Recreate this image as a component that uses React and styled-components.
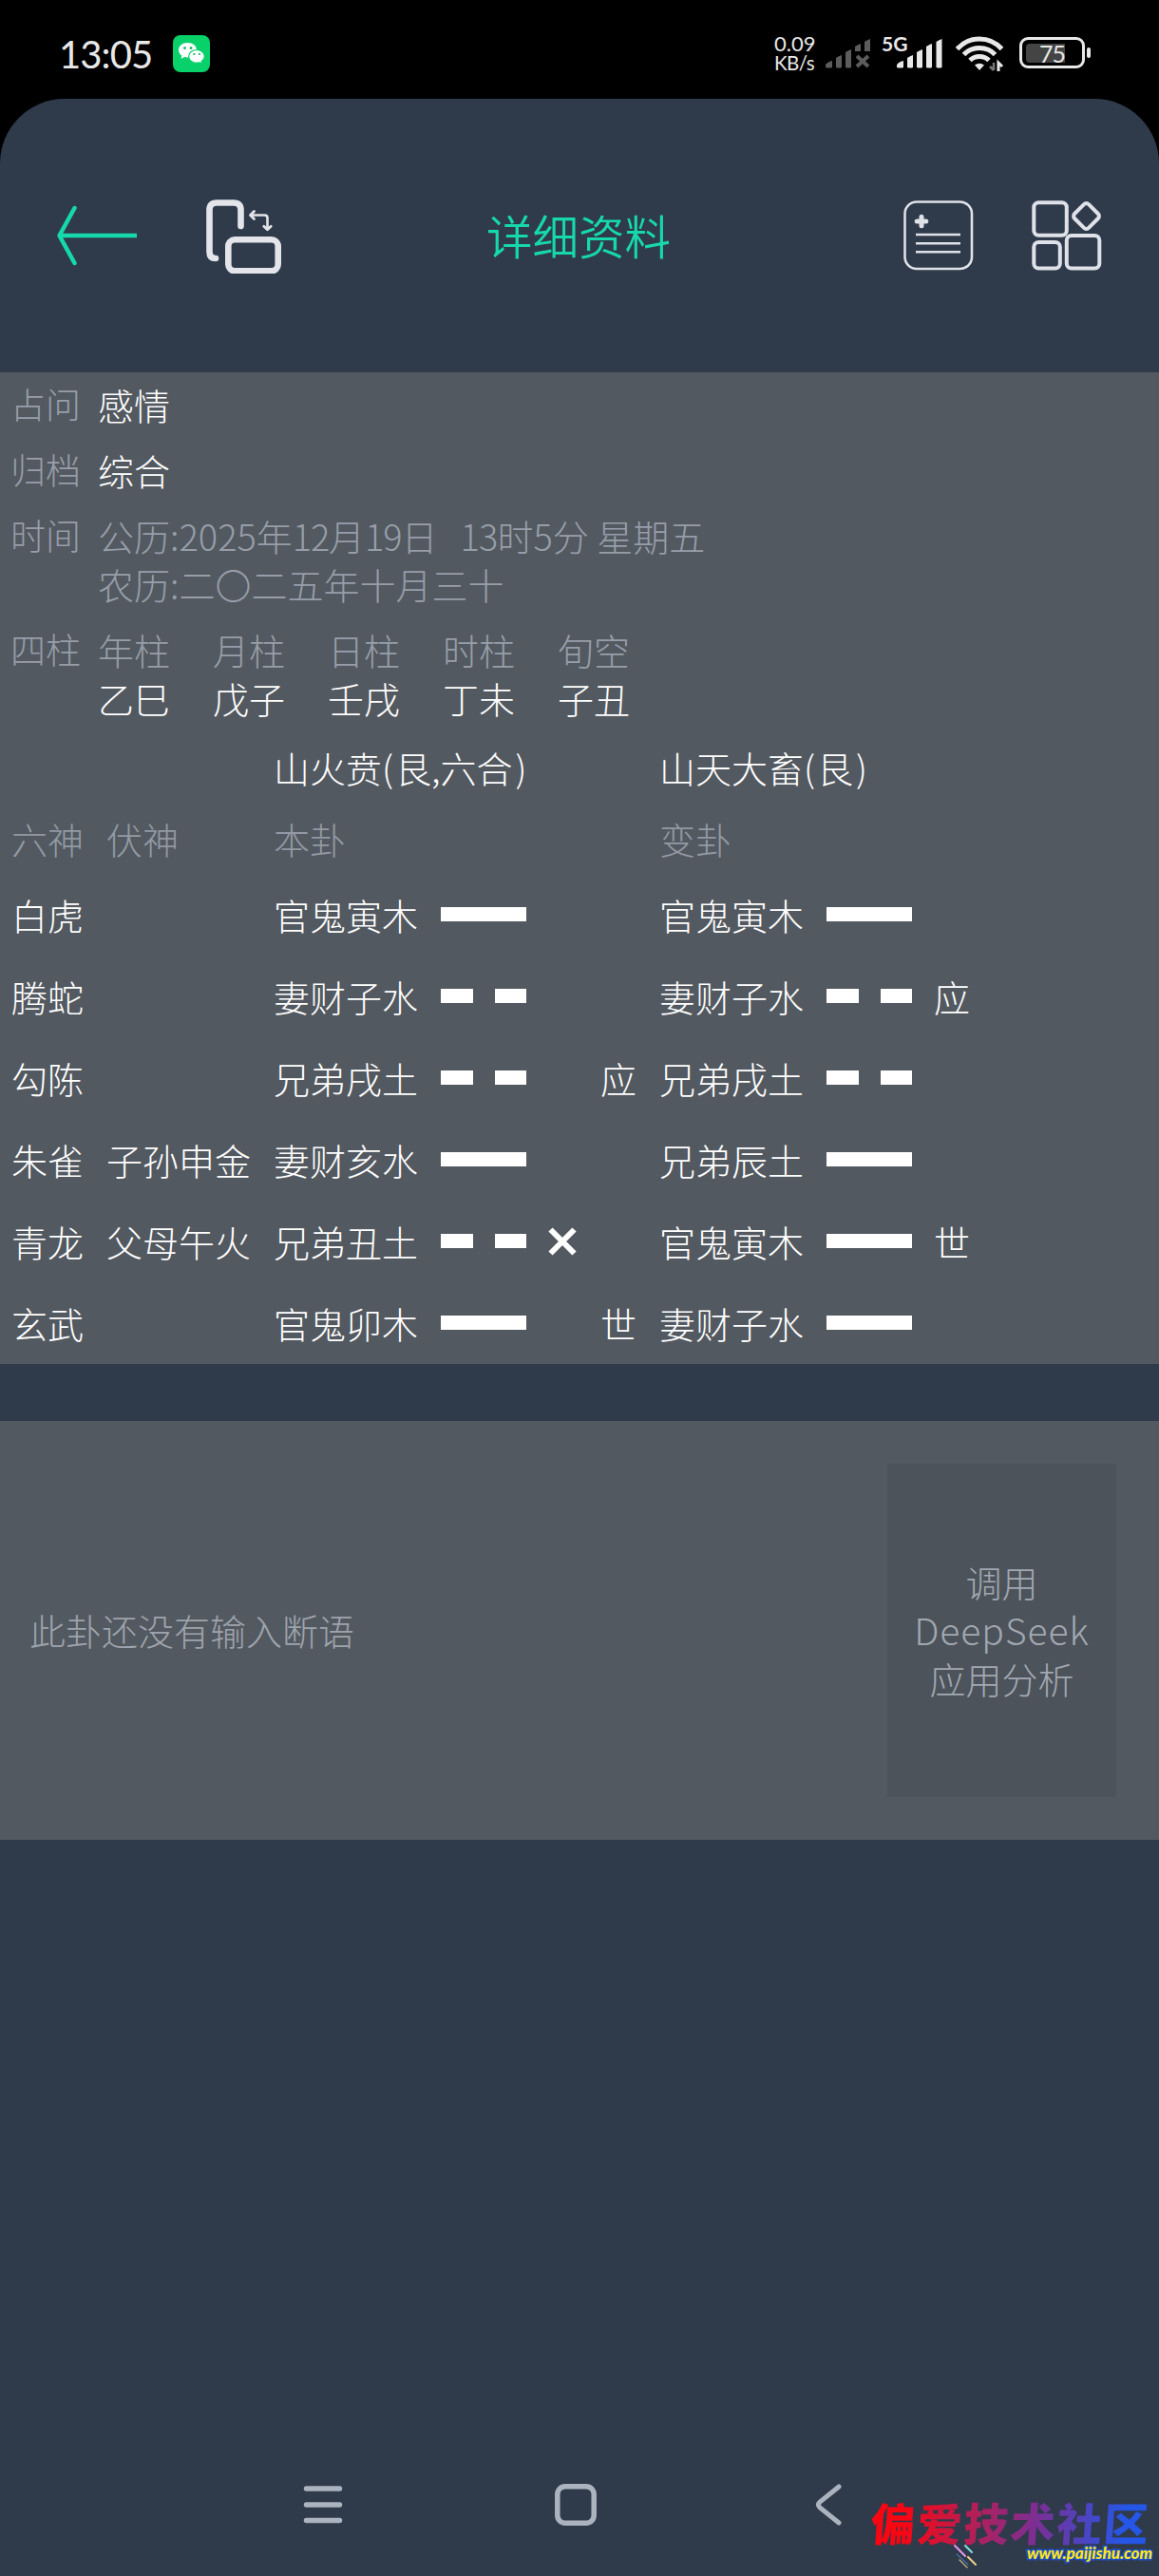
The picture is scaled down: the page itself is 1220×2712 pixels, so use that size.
import React from "react";
import styled, { createGlobalStyle } from "styled-components";

const GlobalStyle = createGlobalStyle`
  html, body { margin: 0; padding: 0; background: #000; }
  * { box-sizing: border-box; }
`;

const Screen = styled.div`
  position: relative;
  width: 1220px;
  height: 2712px;
  display: flex;
  flex-direction: column;
  overflow: hidden;
  background: #000;
  font-family: "Noto Sans CJK SC", "Noto Sans", sans-serif;
  font-weight: 300;
  font-size: 38px;
  line-height: 51px;
  color: #fff;
  white-space: pre;
`;

const StatusBar = styled.div`
  height: 104px;
  flex: none;
  display: flex;
  align-items: flex-start;
  padding: 37px 72px 0 62px;
  color: #e8e8e8;
  svg { display: block; flex: none; }
`;

const Clock = styled.div`
  width: 120px;
  font: 400 40px/40px Lato, sans-serif;
  letter-spacing: -0.9px;
`;

const Spacer = styled.div`
  flex: 1;
`;

const NetSpeed = styled.div`
  width: 54px;
  margin-top: -1px;
  font: 400 21px/20px Lato, sans-serif;
  display: flex;
  flex-direction: column;
`;

const Rate = styled.span`
  font-size: 22px;
  line-height: 20px;
`;

const Unit = styled.span`
  font-size: 20.500px;
  line-height: 20px;
  letter-spacing: -0.5px;
`;

const Network = styled.div`
  width: 78px;
  margin-left: 9px;
  display: flex;
`;

const NetLabel = styled.div`
  width: 16px;
  font: 700 21px/18px Lato, sans-serif;
`;

const Battery = styled.div`
  display: flex;
  align-items: center;
  gap: 2px;
  margin-top: 2px;
`;

const BatteryCase = styled.div`
  width: 69px;
  height: 33px;
  padding: 4px;
  border: 3px solid #e8e8e8;
  border-radius: 9px;
  display: flex;
`;

const BatteryLevel = styled.div`
  width: 41px;
  height: 20px;
  border-radius: 4px 0 0 4px;
  background: #444;
  font: 400 25px/20px Lato, sans-serif;
  letter-spacing: -1px;
  text-align: right;
`;

const BatteryTip = styled.div`
  width: 4px;
  height: 11px;
  border-radius: 2px;
  background: #e8e8e8;
`;

const AppBody = styled.div`
  flex: 1;
  display: flex;
  flex-direction: column;
  background: #2f3a4b;
  border-radius: 68px 68px 0 0;
`;

const Header = styled.header`
  height: 288px;
  flex: none;
  display: grid;
  grid-template-columns: 1fr auto 1fr;
  align-items: center;
  padding: 0 60px 0 58px;
  svg { display: block; }
`;

const HeaderSide = styled.div`
  display: flex;
  align-items: center;
  justify-content: ${(p) => (p.$end ? "flex-end" : "flex-start")};
  gap: ${(p) => p.$gap}px;
`;

const Title = styled.h1`
  margin: 0 0 2px;
  font-size: 48.5px;
  line-height: 60px;
  font-weight: 350;
  color: #16d9ab;
`;

const Panel = styled.section`
  flex: none;
  background: #535960;
`;

const InfoRow = styled.div`
  display: grid;
  grid-template-columns: 92px 1fr;
  padding: 8px 0 10px 11px;
`;

const Label = styled.div`
  font-size: 37px;
  color: #979eaa;
`;

const Value = styled.div`
  color: ${(p) => (p.$muted ? "#979eaa" : "#fff")};
`;

const Digits = styled.span`
  letter-spacing: ${(p) => p.$track}px;
`;

const TimeOfDay = styled.span`
  margin-left: 24px;
`;

const Paren = styled.span`
  padding-right: 2px;
`;

const CloseParen = styled.span`
  padding-left: 3px;
`;

const Pillars = styled.div`
  display: grid;
  grid-template-columns: repeat(5, 121px);
`;

const HexRow = styled.div`
  height: ${(p) => p.$h}px;
  display: grid;
  grid-template-columns: 100px 176px 175px 112px 57px 62px 175px 114px 1fr;
  align-items: center;
  padding-left: 12px;
  color: ${(p) => (p.$muted ? "#9299a4" : "#fff")};
`;

const Cell = styled.div`
  grid-column: ${(p) => p.$col};
  margin-bottom: 2px;
`;

const Yao = styled.div`
  grid-column: ${(p) => p.$col};
  width: 90px;
  height: 15px;
  margin: 0 0 1px 1px;
  display: flex;
  gap: 23px;
`;

const Dash = styled.span`
  flex: 1;
  background: #fff;
`;

const Moving = styled.svg`
  grid-column: 5;
  margin-left: 2px;
`;

const Gap = styled.div`
  height: 60px;
  flex: none;
`;

const NotePanel = styled(Panel)`
  height: 441px;
  display: flex;
  align-items: center;
  justify-content: space-between;
  padding: 0 45px 0 31px;
  color: #9ea4ad;
`;

const NoteText = styled.div`
  margin-bottom: 2px;
`;

const AskButton = styled.button`
  width: 241px;
  height: 351px;
  margin: 0;
  padding: 0 0 2px;
  border: 0;
  background: #4c535b;
  font: inherit;
  color: #a2a8b1;
  text-align: center;
`;

const Brand = styled.div`
  font-size: 39px;
  letter-spacing: 1px;
`;

const NavBar = styled.nav`
  height: 150px;
  flex: none;
  display: flex;
  align-items: center;
  padding-left: 319px;
  svg { display: block; }
  svg + svg { margin-left: 223px; }
  svg:last-child { margin-left: 230px; }
`;

const Watermark = styled.div`
  position: absolute;
  left: 917px;
  top: 2627px;
  width: 300px;
`;

const WatermarkName = styled.div`
  width: 292px;
  font-size: 47px;
  line-height: 56px;
  font-weight: 900;
  letter-spacing: 2px;
  transform: skewX(-4deg);
  color: transparent;
  background: linear-gradient(90deg, #f90613 12%, #b81e52 35%, #7a2f95 60%, #2457e8 92%);
  -webkit-background-clip: text;
  background-clip: text;
`;

const WatermarkUrl = styled.div`
  position: absolute;
  right: 4px;
  top: 50px;
  font: italic 900 17px/22px Lato, sans-serif;
  color: #ffe81a;
  -webkit-text-stroke: 3px #1d50c8;
  paint-order: stroke fill;
`;

const Sparks = styled.svg`
  position: absolute;
  left: 85px;
  top: 50px;
`;

const WeChat = () => (
  <svg width="39" height="39" viewBox="0 0 39 39">
    <rect width="39" height="39" rx="8" fill="#07d168" />
    <path d="M15.5 8C10 8 6 11.400 6 15.700c0 2.400 1.300 4.500 3.400 5.900l-.8 3.200 3.500-1.900c1.100.3 2.200.5 3.400.5 5.500 0 9.500-3.400 9.500-7.700S21 8 15.500 8z" fill="#fff" />
    <path d="M25 15.500c-4.700 0-8.300 3-8.300 6.900s3.600 6.900 8.300 6.900c1.100 0 2.100-.2 3-.5l2.700 1.500-.6-2.700c2-1.200 3.200-3.100 3.200-5.200 0-3.900-3.600-6.900-8.300-6.900z" fill="#fff" stroke="#07d168" strokeWidth="1.200" />
    <g fill="#07b55b">
      <circle cx="12.500" cy="13.600" r="1.400" />
      <circle cx="19" cy="13.600" r="1.400" />
      <circle cx="22.300" cy="20" r="1.100" />
      <circle cx="28" cy="20" r="1.100" />
    </g>
  </svg>
);

const Signal = ({ off }) => (
  <svg width="50" height="38" viewBox="0 0 50 38" fill={off ? "#5c5c5c" : "#e8e8e8"}>
    <path d="M0 34v-2.500q1-3 7-4.500V34q-3.500 1-7 0zM11 34V24q3-2 6-3v13q-3 1-6 0zM21 34V18q3-2 6-3v19q-3 1-6 0z" />
    {off ? (
      <>
        <path d="M31 17v-5q3-2 6-3v8zM41 17V7q3-2 6-3v13z" />
        <path d="M33 22l12 11M45 22L33 33" stroke="#5c5c5c" strokeWidth="4" />
      </>
    ) : (
      <path d="M31 34V12q3-2 6-3v25q-3 1-6 0zM41.500 34V7q3-2 6-3v30q-3 1-6 0z" />
    )}
  </svg>
);

const Wifi = () => (
  <svg width="67" height="39" viewBox="0 0 67 39" fill="none" stroke="#e8e8e8" strokeWidth="5">
    <path d="M1.500 14.500Q11 4 25 4t23.500 10.500" />
    <path d="M8.500 20.500Q15 13.500 25 13.500t16.500 7" />
    <path d="M15 26.500Q19 22.500 25 22.500t10 4" />
    <path d="M20 31.500q5-3.500 10 0L25 37z" fill="#e8e8e8" stroke="none" />
    <path d="M40 29v8M40 37l-4-4" stroke="#777" strokeWidth="2.500" />
    <path d="M45 38v-9l4 4" strokeWidth="3" />
  </svg>
);

const BackIcon = () => (
  <svg width="88" height="66" viewBox="0 0 88 66" fill="none" stroke="#16d9ab" strokeWidth="4.500">
    <path d="M5 33h81" />
    <path d="M20.500 4L4.500 33l16 29" strokeLinecap="round" strokeLinejoin="round" />
  </svg>
);

const RotateIcon = () => (
  <svg width="80" height="80" viewBox="0 0 80 80" fill="none" stroke="#e4e5ea" strokeLinecap="round" strokeLinejoin="round">
    <path d="M36.500 30V13q0-7.500-7.500-7.500H11Q3.500 5.500 3.500 13v44q0 7 6.500 7" strokeWidth="6.600" />
    <rect x="23.300" y="44.300" width="52.400" height="33" rx="7" strokeWidth="6.600" />
    <path d="M48 18.500h13.500q3 0 3 3V32" strokeWidth="2.600" />
    <path d="M50.500 14.500l-4 4 4 4M60.800 30.200l3.700 3.500 3.700-3.500" strokeWidth="2.800" />
  </svg>
);

const NoteIcon = () => (
  <svg width="74" height="74" viewBox="0 0 74 74" fill="none" stroke="#dfe2e8" strokeWidth="2.600">
    <rect x="1.500" y="1.500" width="70.500" height="70.500" rx="12.500" />
    <path d="M13 36h47M13 45.200h47M13 54.300h47" />
    <path d="M19 17.200v9.600M14.200 22h9.600" strokeWidth="5" strokeLinecap="round" />
  </svg>
);

const GridIcon = () => (
  <svg width="74" height="74" viewBox="0 0 74 74" fill="none" stroke="#dfe2e8" strokeWidth="4">
    <rect x="2.300" y="2.300" width="34.500" height="34.500" rx="5" />
    <rect x="2.300" y="44" width="27.500" height="27.500" rx="5" />
    <rect x="36.800" y="37" width="34.500" height="34.500" rx="5" />
    <rect x="47" y="6" width="21" height="21" rx="3.500" transform="rotate(45 57.500 16.500)" />
  </svg>
);

const YaoLine = ({ col, solid }) => (
  <Yao $col={col}>
    <Dash />
    {!solid && <Dash />}
  </Yao>
);

const pillars = ["年柱", "月柱", "日柱", "时柱", "旬空"];
const stems = ["乙巳", "戊子", "壬戌", "丁未", "子丑"];

const lines = [
  { god: "白虎", a: "官鬼寅木", aSolid: true, b: "官鬼寅木", bSolid: true },
  { god: "腾蛇", a: "妻财子水", b: "妻财子水", bMark: "应" },
  { god: "勾陈", a: "兄弟戌土", aMark: "应", b: "兄弟戌土" },
  { god: "朱雀", hidden: "子孙申金", a: "妻财亥水", aSolid: true, b: "兄弟辰土", bSolid: true },
  { god: "青龙", hidden: "父母午火", a: "兄弟丑土", moving: true, b: "官鬼寅木", bSolid: true, bMark: "世" },
  { god: "玄武", a: "官鬼卯木", aSolid: true, aMark: "世", b: "妻财子水", bSolid: true },
];

export default function App() {
  return (
    <Screen>
      <GlobalStyle />
      <StatusBar>
        <Clock>13:05</Clock>
        <WeChat />
        <Spacer />
        <NetSpeed>
          <Rate>0.09</Rate>
          <Unit>KB/s</Unit>
        </NetSpeed>
        <Signal off />
        <Network>
          <NetLabel>5G</NetLabel>
          <Signal />
        </Network>
        <Wifi />
        <Battery>
          <BatteryCase>
            <BatteryLevel>75</BatteryLevel>
          </BatteryCase>
          <BatteryTip />
        </Battery>
      </StatusBar>

      <AppBody>
        <Header>
          <HeaderSide $gap={71}>
            <BackIcon />
            <RotateIcon />
          </HeaderSide>
          <Title>详细资料</Title>
          <HeaderSide $end $gap={61}>
            <NoteIcon />
            <GridIcon />
          </HeaderSide>
        </Header>

        <Panel>
          <InfoRow>
            <Label>占问</Label>
            <Value>感情</Value>
          </InfoRow>
          <InfoRow>
            <Label>归档</Label>
            <Value>综合</Value>
          </InfoRow>
          <InfoRow>
            <Label>时间</Label>
            <Value $muted>
              <div>
                公历:2025年<Digits $track={-1.2}>12</Digits>月<Digits $track={-1.2}>19</Digits>日
                <TimeOfDay><Digits $track={-0.8}>13</Digits>时5分</TimeOfDay> 星期五
              </div>
              <div>农历:二〇二五年十月三十</div>
            </Value>
          </InfoRow>
          <InfoRow>
            <Label>四柱</Label>
            <Pillars>
              {pillars.map((t) => <Value key={t} $muted>{t}</Value>)}
              {stems.map((t) => <Value key={t}>{t}</Value>)}
            </Pillars>
          </InfoRow>
          <HexRow $h={76}>
            <Cell $col={3}>山火贲<Paren>(</Paren>艮,六合<CloseParen>)</CloseParen></Cell>
            <Cell $col={7}>山天大畜<Paren>(</Paren>艮<CloseParen>)</CloseParen></Cell>
          </HexRow>
          <HexRow $h={74} $muted>
            <Cell $col={1}>六神</Cell>
            <Cell $col={2}>伏神</Cell>
            <Cell $col={3}>本卦</Cell>
            <Cell $col={7}>变卦</Cell>
          </HexRow>
          {lines.map((l) => (
            <HexRow key={l.god} $h={86}>
              <Cell $col={1}>{l.god}</Cell>
              {l.hidden && <Cell $col={2}>{l.hidden}</Cell>}
              <Cell $col={3}>{l.a}</Cell>
              <YaoLine col={4} solid={l.aSolid} />
              {l.moving && (
                <Moving width="30" height="30" viewBox="0 0 30 30" stroke="#fff" strokeWidth="6">
                  <path d="M2.500 2.500l25 25M27.500 2.500l-25 25" />
                </Moving>
              )}
              {l.aMark && <Cell $col={6}>{l.aMark}</Cell>}
              <Cell $col={7}>{l.b}</Cell>
              <YaoLine col={8} solid={l.bSolid} />
              {l.bMark && <Cell $col={9}>{l.bMark}</Cell>}
            </HexRow>
          ))}
        </Panel>

        <Gap />

        <NotePanel>
          <NoteText>此卦还没有输入断语</NoteText>
          <AskButton>
            <div>调用</div>
            <Brand>DeepSeek</Brand>
            <div>应用分析</div>
          </AskButton>
        </NotePanel>

        <Spacer />

        <NavBar>
          <svg width="42" height="42" viewBox="0 0 42 42" stroke="#abb3be" strokeWidth="5.500" strokeLinecap="round">
            <path d="M3.500 4h35M3.500 21h35M3.500 37.500h35" />
          </svg>
          <svg width="44" height="44" viewBox="0 0 44 44" fill="none" stroke="#abb3be" strokeWidth="5.500">
            <rect x="2.800" y="2.800" width="38.400" height="38.400" rx="8" />
          </svg>
          <svg width="28" height="44" viewBox="0 0 28 44" fill="none" stroke="#abb3be" strokeWidth="5" strokeLinecap="round">
            <path d="M25 3L5 19q-3 3 0 6l20 16" />
          </svg>
        </NavBar>
      </AppBody>

      <Watermark>
        <WatermarkName>偏爱技术社区</WatermarkName>
        <Sparks width="30" height="28" viewBox="0 0 30 28" strokeLinecap="round">
          <path d="M3 3l11 11" stroke="#e99af0" strokeWidth="2" />
          <path d="M14 3l7 7" stroke="#7fe0e0" strokeWidth="2" />
          <path d="M5 12l12 11" stroke="#5a93d8" strokeWidth="1" />
          <path d="M17 15l8 8" stroke="#f0d488" strokeWidth="2" />
          <path d="M8 18l8 8" stroke="#cdb98c" strokeWidth="1.200" />
        </Sparks>
        <WatermarkUrl>www.paijishu.com</WatermarkUrl>
      </Watermark>
    </Screen>
  );
}
